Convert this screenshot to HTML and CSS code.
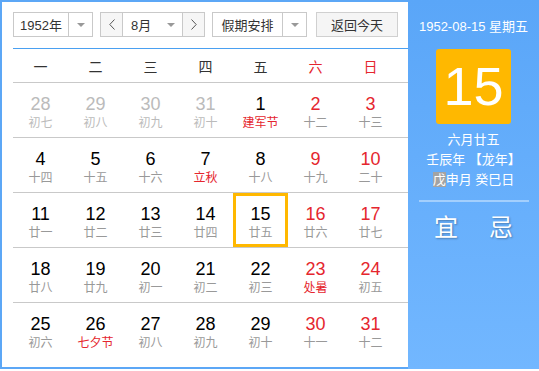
FILE: index.html
```html
<!DOCTYPE html>
<html lang="zh-CN">
<head>
<meta charset="UTF-8">
<title>万年历</title>
<link rel="stylesheet" href="styles.css">
</head>
<body>
<div class="calendar">
  <div class="main">
    <div class="toolbar">
      <div class="select year">
        <span class="select-text">1952年</span>
        <span class="select-arrow"><i class="caret"></i></span>
      </div>
      <div class="month-group">
        <span class="nav-btn"><svg width="6" height="11" viewBox="0 0 6 11"><polyline points="5.5,0.5 0.8,5.5 5.5,10.5" fill="none" stroke="#555" stroke-width="1"/></svg></span>
        <div class="month-select"><span>8月</span><i class="caret"></i></div>
        <span class="nav-btn"><svg width="6" height="11" viewBox="0 0 6 11"><polyline points="0.5,0.5 5.2,5.5 0.5,10.5" fill="none" stroke="#555" stroke-width="1"/></svg></span>
      </div>
      <div class="select holiday">
        <span class="select-text">假期安排</span>
        <span class="select-arrow"><i class="caret"></i></span>
      </div>
      <button class="today-btn">返回今天</button>
    </div>

    <div class="week">
      <span>一</span><span>二</span><span>三</span><span>四</span><span>五</span>
      <span class="red">六</span><span class="red">日</span>
    </div>

    <div class="row">
      <div class="day other"><b>28</b><i>初七</i></div>
      <div class="day other"><b>29</b><i>初八</i></div>
      <div class="day other"><b>30</b><i>初九</i></div>
      <div class="day other"><b>31</b><i>初十</i></div>
      <div class="day"><b>1</b><i class="fest">建军节</i></div>
      <div class="day weekend"><b>2</b><i>十二</i></div>
      <div class="day weekend"><b>3</b><i>十三</i></div>
    </div>
    <div class="row">
      <div class="day"><b>4</b><i>十四</i></div>
      <div class="day"><b>5</b><i>十五</i></div>
      <div class="day"><b>6</b><i>十六</i></div>
      <div class="day"><b>7</b><i class="fest">立秋</i></div>
      <div class="day"><b>8</b><i>十八</i></div>
      <div class="day weekend"><b>9</b><i>十九</i></div>
      <div class="day weekend"><b>10</b><i>二十</i></div>
    </div>
    <div class="row">
      <div class="day"><b>11</b><i>廿一</i></div>
      <div class="day"><b>12</b><i>廿二</i></div>
      <div class="day"><b>13</b><i>廿三</i></div>
      <div class="day"><b>14</b><i>廿四</i></div>
      <div class="day selected"><b>15</b><i>廿五</i></div>
      <div class="day weekend"><b>16</b><i>廿六</i></div>
      <div class="day weekend"><b>17</b><i>廿七</i></div>
    </div>
    <div class="row">
      <div class="day"><b>18</b><i>廿八</i></div>
      <div class="day"><b>19</b><i>廿九</i></div>
      <div class="day"><b>20</b><i>初一</i></div>
      <div class="day"><b>21</b><i>初二</i></div>
      <div class="day"><b>22</b><i>初三</i></div>
      <div class="day weekend"><b>23</b><i class="fest">处暑</i></div>
      <div class="day weekend"><b>24</b><i>初五</i></div>
    </div>
    <div class="row last">
      <div class="day"><b>25</b><i>初六</i></div>
      <div class="day"><b>26</b><i class="fest">七夕节</i></div>
      <div class="day"><b>27</b><i>初八</i></div>
      <div class="day"><b>28</b><i>初九</i></div>
      <div class="day"><b>29</b><i>初十</i></div>
      <div class="day weekend"><b>30</b><i>十一</i></div>
      <div class="day weekend"><b>31</b><i>十二</i></div>
    </div>
  </div>

  <div class="side">
    <div class="side-date">1952-08-15 星期五</div>
    <div class="side-day">15</div>
    <div class="side-lunar">
      <p>六月廿五</p>
      <p>壬辰年 【龙年】</p>
      <p><span class="sel">戊</span>申月 癸巳日</p>
    </div>
    <div class="side-line"></div>
    <div class="side-yiji"><span>宜</span><span>忌</span></div>
  </div>
</div>
</body>
</html>
```

FILE: styles.css
```css
:root {
  --azul: #5ca7f6;
  --vermelho: #e5262e;
  --laranja: #ffb800;
  --borda: #c9c9c9;
}

body {
  margin: 0;
  background: #fff;
  font-family: "Liberation Sans", "Noto Sans CJK SC", sans-serif;
  color: #000;
}

.calendar {
  display: flex;
  width: 539px;
  height: 369px;
  box-sizing: border-box;
  border: 2px solid var(--azul);
  border-right: 0;
}

.main {
  width: 406px;
  padding: 10px 0 0 11px;
  box-sizing: border-box;
}

/* barra de cima */
.toolbar {
  display: flex;
  height: 25px;
  margin-bottom: 11px;
  font-size: 13px;
  color: #333;
}

.select {
  display: flex;
  height: 25px;
  box-sizing: border-box;
  border: 1px solid var(--borda);
  margin-right: 7px;
}

.select-text {
  display: flex;
  align-items: center;
  justify-content: center;
  border-right: 1px solid var(--borda);
}

.select-arrow {
  display: flex;
  align-items: center;
  justify-content: center;
  width: 23px;
}

.year { width: 80px; }
.year .select-text { width: 54px; }

.holiday { width: 95px; }
.holiday .select-text { width: 69px; }

.caret {
  width: 0;
  height: 0;
  border-left: 4px solid transparent;
  border-right: 4px solid transparent;
  border-top: 4px solid #999;
}

.month-group {
  display: flex;
  width: 105px;
  height: 25px;
  box-sizing: border-box;
  border: 1px solid var(--borda);
  margin-right: 7px;
}

.nav-btn {
  display: flex;
  align-items: center;
  justify-content: center;
  width: 21px;
  background: #f6f6f6;
}

.month-select {
  flex: 1;
  display: flex;
  align-items: center;
  justify-content: space-between;
  padding: 0 7px 0 8px;
  border-left: 1px solid var(--borda);
  border-right: 1px solid var(--borda);
}

.today-btn {
  width: 82px;
  height: 25px;
  margin-left: 2px;
  padding: 0;
  border: 1px solid #d0d0d0;
  background: #f5f5f5;
  font-family: inherit;
  font-size: 13px;
  color: #333;
}

/* grade dos dias */
.week {
  display: grid;
  grid-template-columns: repeat(7, 55px);
  height: 33px;
  align-items: center;
  border-top: 1px solid #4aa0f1;
  border-bottom: 1px solid var(--borda);
  font-size: 14px;
  color: #333;
  text-align: center;
}

.red { color: var(--vermelho); }

.row {
  display: grid;
  grid-template-columns: repeat(7, 55px);
  height: 55px;
  box-sizing: border-box;
  border-bottom: 1px solid var(--borda);
}

.row.last { border-bottom: 0; }

.day {
  display: flex;
  flex-direction: column;
  align-items: center;
  padding-top: 10px;
  box-sizing: border-box;
}

.day b {
  font-weight: normal;
  font-size: 18px;
  line-height: 22px;
}

.day i {
  font-style: normal;
  font-size: 12px;
  line-height: 17px;
  color: #999;
}

.day.other b,
.day.other i { color: #bbb; }

.day.weekend b { color: var(--vermelho); }

.day i.fest { color: var(--vermelho); }

.day.selected {
  border: 3px solid var(--laranja);
  padding-top: 7px;
}

/* painel da direita */
.side {
  width: 131px;
  margin: -2px 0;
  background: linear-gradient(to bottom, #5aa6f8, #72b7ff);
  color: #fff;
  text-align: center;
}

.side-date {
  margin-top: 17px;
  font-size: 13px;
  line-height: 20px;
}

.side-day {
  width: 75px;
  height: 75px;
  margin: 12px auto 0;
  background: var(--laranja);
  border-radius: 3px;
  font-size: 54px;
  line-height: 75px;
}

.side-lunar {
  margin-top: 6px;
  font-size: 13px;
}

.side-lunar p {
  margin: 0;
  line-height: 20px;
}

.sel { background: #a3a3a3; }

.side-line {
  height: 2px;
  margin: 10px 10px 0 11px;
  background: rgba(255, 255, 255, 0.4);
}

.side-yiji {
  display: flex;
  justify-content: center;
  gap: 31px;
  margin-top: 14px;
  font-size: 24px;
  line-height: 24px;
  text-shadow: 1px 1px 2px rgba(0, 0, 0, 0.3);
}
```
